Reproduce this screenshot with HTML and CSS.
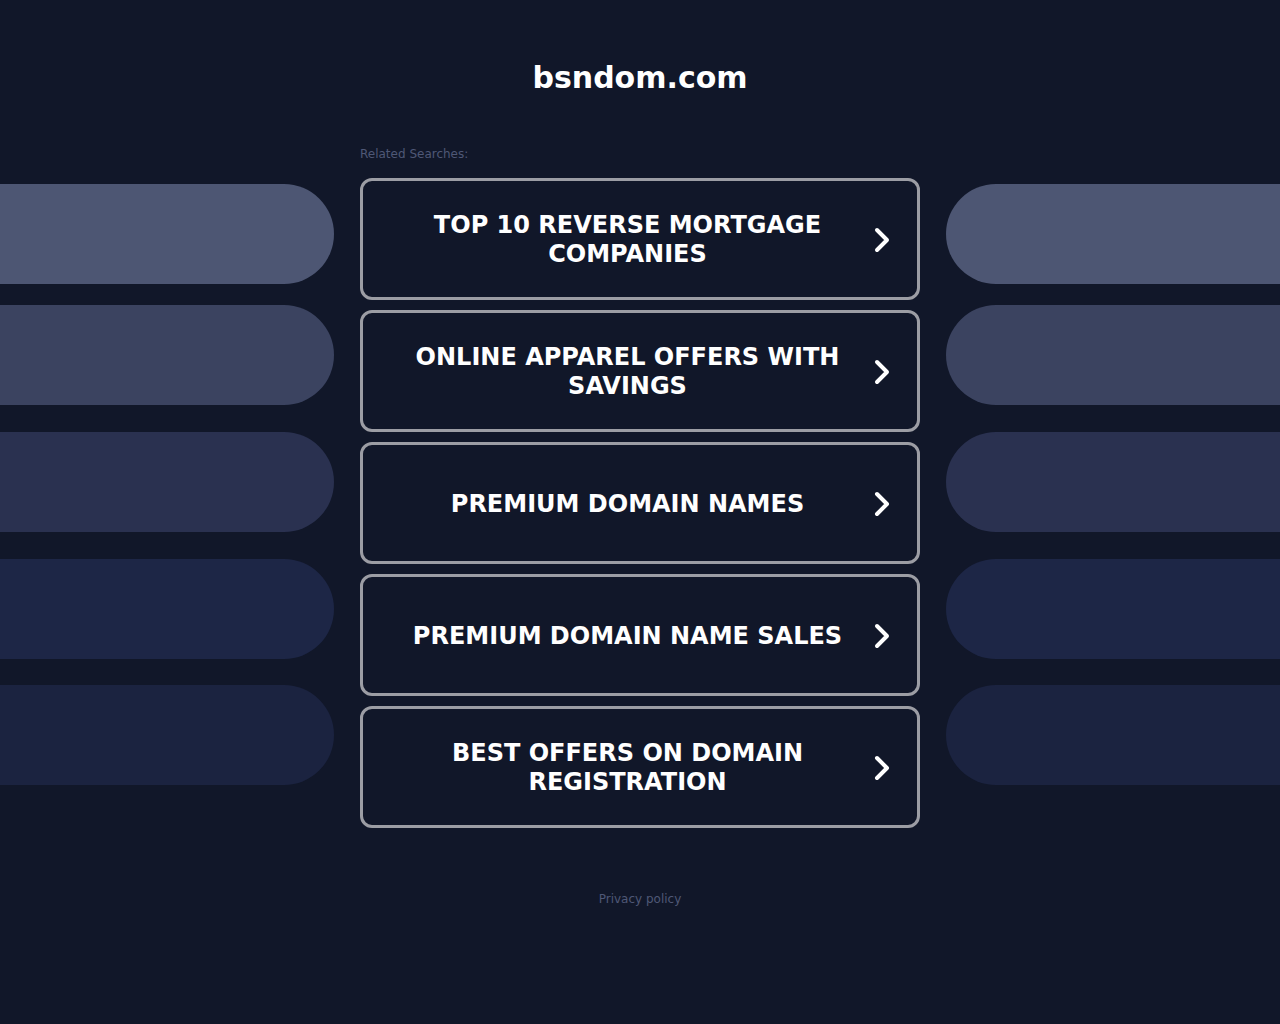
FILE: index.html
```html
<!DOCTYPE html>
<html lang="en">
<head>
<meta charset="utf-8">
<title>bsndom.com</title>
<link rel="stylesheet" href="styles.css">
</head>
<body>
<header class="header">
  <h1 class="title">bsndom.com</h1>
</header>
<main class="layout">
  <div class="side side-left">
    <div class="pill pill-1"></div>
    <div class="pill pill-2"></div>
    <div class="pill pill-3"></div>
    <div class="pill pill-4"></div>
    <div class="pill pill-5"></div>
  </div>
  <div class="center">
    <div class="label">Related Searches:</div>
    <div class="cards">
      <a class="card" href="#"><span class="card-text">TOP 10 REVERSE MORTGAGE COMPANIES</span><svg class="chev" viewBox="0 0 16 26" width="16" height="26"><path d="M3 3 L13 13 L3 23" fill="none" stroke="#fff" stroke-width="4" stroke-linecap="round" stroke-linejoin="round"/></svg></a>
      <a class="card" href="#"><span class="card-text">ONLINE APPAREL OFFERS WITH SAVINGS</span><svg class="chev" viewBox="0 0 16 26" width="16" height="26"><path d="M3 3 L13 13 L3 23" fill="none" stroke="#fff" stroke-width="4" stroke-linecap="round" stroke-linejoin="round"/></svg></a>
      <a class="card" href="#"><span class="card-text">PREMIUM DOMAIN NAMES</span><svg class="chev" viewBox="0 0 16 26" width="16" height="26"><path d="M3 3 L13 13 L3 23" fill="none" stroke="#fff" stroke-width="4" stroke-linecap="round" stroke-linejoin="round"/></svg></a>
      <a class="card" href="#"><span class="card-text">PREMIUM DOMAIN NAME SALES</span><svg class="chev" viewBox="0 0 16 26" width="16" height="26"><path d="M3 3 L13 13 L3 23" fill="none" stroke="#fff" stroke-width="4" stroke-linecap="round" stroke-linejoin="round"/></svg></a>
      <a class="card" href="#"><span class="card-text">BEST OFFERS ON DOMAIN REGISTRATION</span><svg class="chev" viewBox="0 0 16 26" width="16" height="26"><path d="M3 3 L13 13 L3 23" fill="none" stroke="#fff" stroke-width="4" stroke-linecap="round" stroke-linejoin="round"/></svg></a>
    </div>
    <footer class="footer"><a class="privacy" href="#">Privacy policy</a></footer>
  </div>
  <div class="side side-right">
    <div class="pill pill-1"></div>
    <div class="pill pill-2"></div>
    <div class="pill pill-3"></div>
    <div class="pill pill-4"></div>
    <div class="pill pill-5"></div>
  </div>
</main>
</body>
</html>
```

FILE: styles.css
```css
html, body {
  margin: 0;
  padding: 0;
}
body {
  background: #111729;
  font-family: "DejaVu Sans", sans-serif;
  color: #fff;
  min-height: 1024px;
}
.header {
  padding-top: 60px;
  text-align: center;
}
.title {
  margin: 0;
  font-size: 30px;
  line-height: 36px;
  font-weight: bold;
  color: #fff;
}
.layout {
  display: grid;
  grid-template-columns: 334px 560px 334px;
  column-gap: 26px;
  margin-top: 51px;
}
.side {
  display: flex;
  flex-direction: column;
  gap: 27px;
  padding-top: 37px;
}
.pill {
  height: 100px;
}
.side-left .pill {
  border-radius: 0 50px 50px 0;
}
.side-right .pill {
  border-radius: 50px 0 0 50px;
}
.pill-1 { background: #4d5673; margin-bottom: -6px; }
.pill-2 { background: #3b4360; }
.pill-3 { background: #2a3150; }
.pill-4 { background: #1d2646; }
.pill-5 { background: #1b2340; margin-top: -1px; }
.label {
  font-size: 12px;
  line-height: 14px;
  color: #4f5876;
  margin-bottom: 17px;
}
.cards {
  display: flex;
  flex-direction: column;
  gap: 10px;
}
.card {
  box-sizing: border-box;
  height: 122px;
  border: 3px solid #9c9da4;
  border-radius: 12px;
  display: flex;
  align-items: center;
  padding: 2px 27px 0 22px;
  gap: 4px;
  text-decoration: none;
  color: #fff;
}
.card-text {
  flex: 1;
  text-align: center;
  font-size: 24px;
  line-height: 29px;
  font-weight: bold;
  text-transform: uppercase;
}
.chev {
  flex: none;
  display: block;
}
.footer {
  text-align: center;
  margin-top: 60px;
}
.privacy {
  font-size: 12px;
  line-height: 14px;
  color: #4f5876;
  text-decoration: none;
}
```
